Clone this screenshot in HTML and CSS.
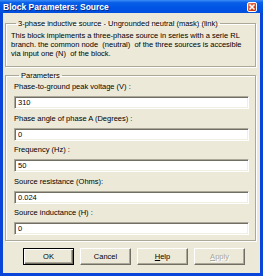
FILE: index.html
```html
<!DOCTYPE html>
<html>
<head lang="en">
    <meta charset="UTF-8">
    <title>Block Parameters: Source</title>
    <link rel="stylesheet" href="styles.css">
</head>
<body>
<div class="window">
    <div class="titlebar">
        <span class="title">Block Parameters: Source</span>
        <span class="close">
            <svg width="8" height="8" viewBox="0 0 8 8"><path d="M1.5 1.5L6.5 6.5M6.5 1.5L1.5 6.5" stroke="#fff" stroke-width="1.6"/></svg>
        </span>
    </div>
    <div class="content">
        <fieldset class="group">
            <legend>3-phase inductive source - Ungrounded neutral (mask) (link)</legend>
            <p class="desc">This block implements a three-phase source in series with a serie RL branch. the common node&nbsp; (neutral)&nbsp; of the three sources is accesible via input one (N)&nbsp; of the block.</p>
        </fieldset>
        <fieldset class="group params">
            <legend>Parameters</legend>
            <div class="field">
                <label>Phase-to-ground peak voltage (V) :</label>
                <input type="text" value="310">
            </div>
            <div class="field">
                <label>Phase angle of phase A (Degrees) :</label>
                <input type="text" value="0">
            </div>
            <div class="field">
                <label>Frequency (Hz) :</label>
                <input type="text" value="50">
            </div>
            <div class="field">
                <label>Source resistance (Ohms):</label>
                <input type="text" value="0.024">
            </div>
            <div class="field">
                <label>Source inductance (H) :</label>
                <input type="text" value="0">
            </div>
        </fieldset>
        <div class="buttons">
            <button class="btn default">OK</button>
            <button class="btn">Cancel</button>
            <button class="btn"><u>H</u>elp</button>
            <button class="btn disabled"><u>A</u>pply</button>
        </div>
    </div>
</div>
</body>
</html>
```

FILE: styles.css
```css
* {
    margin: 0;
    padding: 0;
    box-sizing: border-box;
}
body {
    background: #fff;
    font-family: "Liberation Sans", Arial, sans-serif;
    font-size: 7.5px;
    color: #000;
}
.window {
    width: 263px;
    height: 276px;
    background: #0841d9;
    border: 0 solid #0845d8;
    border-width: 0 3px 3px 3px;
    display: flex;
    flex-direction: column;
}
.titlebar {
    height: 13px;
    margin: 0 -3px;
    padding: 0 3px 0 3px;
    background: linear-gradient(#3c8ef6 0%, #0a5fe8 20%, #0055e5 55%, #004fdd 100%);
    display: flex;
    align-items: center;
    justify-content: space-between;
}
.title {
    color: #fff;
    font-weight: bold;
    font-size: 8.5px;
    text-shadow: 1px 1px 0 #0a2a8a;
}
.close {
    width: 10px;
    height: 10px;
    margin-right: 3px;
    border: 1px solid #fff;
    border-radius: 2px;
    background: linear-gradient(135deg, #f08a6a, #d8401a 60%, #c23410);
    display: flex;
    align-items: center;
    justify-content: center;
}
.content {
    flex: 1;
    background: #ece9d8;
    padding: 0 4px 0 2px;
    display: flex;
    flex-direction: column;
}
.group {
    border: 1px solid #aca899;
    box-shadow: 1px 1px 0 #fff, inset 1px 1px 0 #fff;
    padding: 3px 6px 8px 5px;
    margin-top: 6px;
}
.group legend {
    margin-left: 5px;
    padding: 0 2px;
    line-height: 9px;
}
.desc {
    line-height: 9px;
}
.params {
    margin-top: 4px;
    padding: 2px 6px 5px 8px;
}
.field + .field {
    margin-top: 4.6px;
}
.field label {
    display: block;
    line-height: 10px;
    margin-bottom: 4px;
}
.field input {
    display: block;
    width: 100%;
    height: 13px;
    font-family: "Liberation Sans", Arial, sans-serif;
    font-size: 7.5px;
    padding: 0 3px;
    background: #fff;
    border: 1px solid;
    border-color: #aca899 #fff #fff #aca899;
    box-shadow: inset 1px 1px 0 #716f64, inset -1px -1px 0 #f1efe2;
    outline: none;
}
.buttons {
    display: flex;
    gap: 6px;
    padding-left: 18px;
    margin-top: 7px;
}
.btn {
    width: 51px;
    height: 17px;
    font-family: "Liberation Sans", Arial, sans-serif;
    font-size: 7.5px;
    background: #ece9d8;
    border: 1px solid;
    border-color: #fff #716f64 #716f64 #fff;
    box-shadow: inset -1px -1px 0 #aca899;
    color: #000;
}
.btn.default {
    border: 1px solid #000;
    box-shadow: inset 1px 1px 0 #fff, inset -1px -1px 0 #716f64, inset -2px -2px 0 #aca899;
}
.btn u {
    text-decoration: underline;
}
.btn.disabled {
    color: #aca899;
    text-shadow: 1px 1px 0 #fff;
}
```
